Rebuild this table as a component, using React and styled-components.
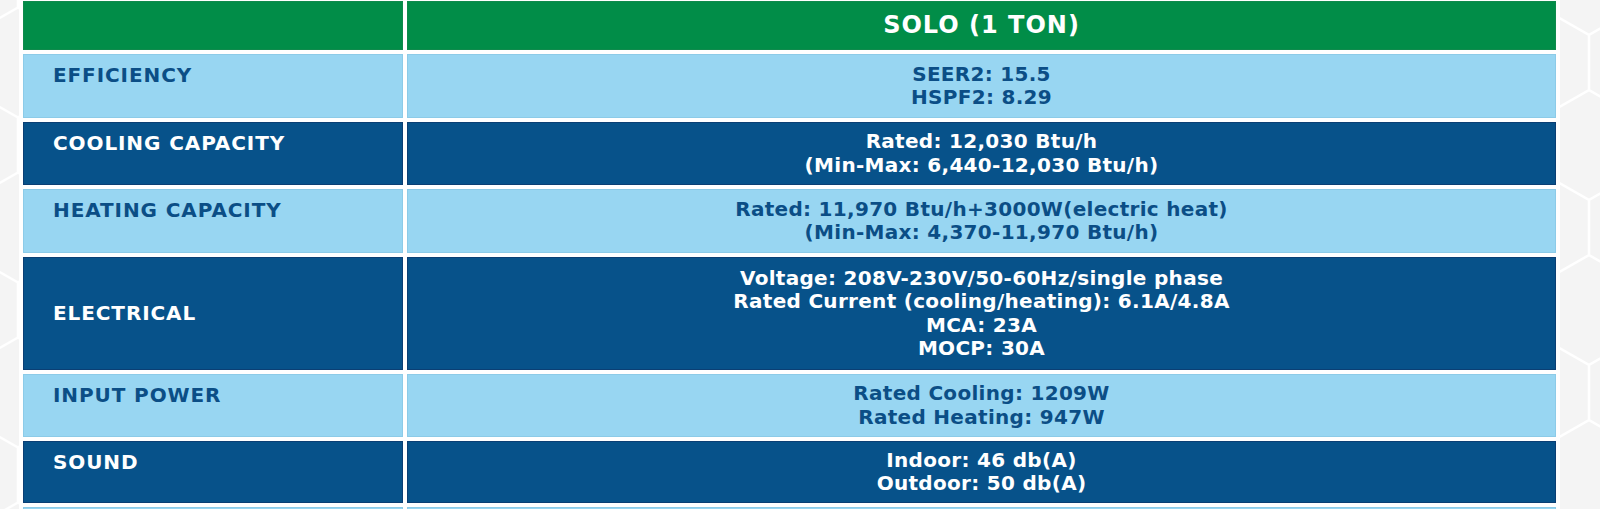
import React from "react";
import styled, { createGlobalStyle } from "styled-components";

const R = 55;
const W = Math.sqrt(3) * R;
const H = 3 * R;
const hexPath = `M${W / 2} 0V${R / 2}L${W} ${R}V${2 * R}L${W / 2} ${2.5 * R}V${H}M${W / 2} ${2.5 * R}L0 ${2 * R}V${R}L${W / 2} ${R / 2}`;
const hexSvg = `<svg xmlns='http://www.w3.org/2000/svg' width='${W}' height='${H}'><path d='${hexPath}' fill='none' stroke='white' stroke-width='2.5'/></svg>`;
const hexUri = `url("data:image/svg+xml,${encodeURIComponent(hexSvg)}")`;

const GlobalStyle = createGlobalStyle`
  html, body {
    margin: 0;
    padding: 0;
  }
  body {
    background-color: #f4f4f4;
    background-image: ${hexUri};
    background-position: -30px -20px;
    font-family: "DejaVu Sans", "Open Sans", sans-serif;
    overflow: hidden;
  }
`;

const Page = styled.div`
  width: 1600px;
  height: 509px;
  overflow: hidden;
`;

const Table = styled.div`
  margin-left: 19px;
  width: 1533px;
  padding: 1px 4px 4px;
  background: #ffffff;
  display: flex;
  flex-direction: column;
  gap: 4px;
`;

const Row = styled.div`
  display: grid;
  grid-template-columns: 380px 1fr;
  column-gap: 4px;
  height: ${(p) => p.$h}px;
`;

const tones = {
  green: { bg: "#018d48", fg: "#ffffff", border: "#0f8a4c" },
  light: { bg: "#98d6f2", fg: "#0b4e86", border: "#8ccbe8" },
  dark: { bg: "#07528a", fg: "#ffffff", border: "#0b3f74" },
};

const Cell = styled.div`
  box-sizing: border-box;
  background: ${(p) => tones[p.$tone].bg};
  color: ${(p) => tones[p.$tone].fg};
  border: 1px solid ${(p) => tones[p.$tone].border};
  font-weight: 700;
  font-size: 20px;
  line-height: 23.5px;
`;

const LabelCell = styled(Cell)`
  display: flex;
  align-items: ${(p) => (p.$center ? "center" : "flex-start")};
  padding: ${(p) => (p.$center ? "0" : "9px")} 0 0 29px;
  letter-spacing: 0.9px;
`;

const ValueCell = styled(Cell)`
  display: flex;
  flex-direction: column;
  align-items: center;
  justify-content: center;
  text-align: center;
  letter-spacing: 0.3px;
`;

const HeaderCell = styled(Cell)`
  display: flex;
  align-items: center;
  justify-content: center;
  font-size: 24px;
  letter-spacing: 1px;
`;

const Line = styled.span`
  display: block;
  white-space: nowrap;
`;

const rows = [
  { label: "EFFICIENCY", lines: ["SEER2: 15.5", "HSPF2: 8.29"], tone: "light", h: 64 },
  { label: "COOLING CAPACITY", lines: ["Rated: 12,030 Btu/h", "(Min-Max: 6,440-12,030 Btu/h)"], tone: "dark", h: 63 },
  { label: "HEATING CAPACITY", lines: ["Rated: 11,970 Btu/h+3000W(electric heat)", "(Min-Max: 4,370-11,970 Btu/h)"], tone: "light", h: 64 },
  {
    label: "ELECTRICAL",
    lines: [
      "Voltage: 208V-230V/50-60Hz/single phase",
      "Rated Current (cooling/heating): 6.1A/4.8A",
      "MCA: 23A",
      "MOCP: 30A",
    ],
    tone: "dark",
    h: 113,
    center: true,
  },
  { label: "INPUT POWER", lines: ["Rated Cooling: 1209W", "Rated Heating: 947W"], tone: "light", h: 63 },
  { label: "SOUND", lines: ["Indoor: 46 db(A)", "Outdoor: 50 db(A)"], tone: "dark", h: 62 },
  { label: "", lines: [], tone: "light", h: 64 },
];

export default function App() {
  return (
    <Page>
      <GlobalStyle />
      <Table>
        <Row $h={49}>
          <HeaderCell $tone="green" />
          <HeaderCell $tone="green">SOLO (1 TON)</HeaderCell>
        </Row>
        {rows.map((r, i) => (
          <Row key={i} $h={r.h}>
            <LabelCell $tone={r.tone} $center={r.center}>
              {r.label}
            </LabelCell>
            <ValueCell $tone={r.tone}>
              {r.lines.map((l) => (
                <Line key={l}>{l}</Line>
              ))}
            </ValueCell>
          </Row>
        ))}
      </Table>
    </Page>
  );
}
